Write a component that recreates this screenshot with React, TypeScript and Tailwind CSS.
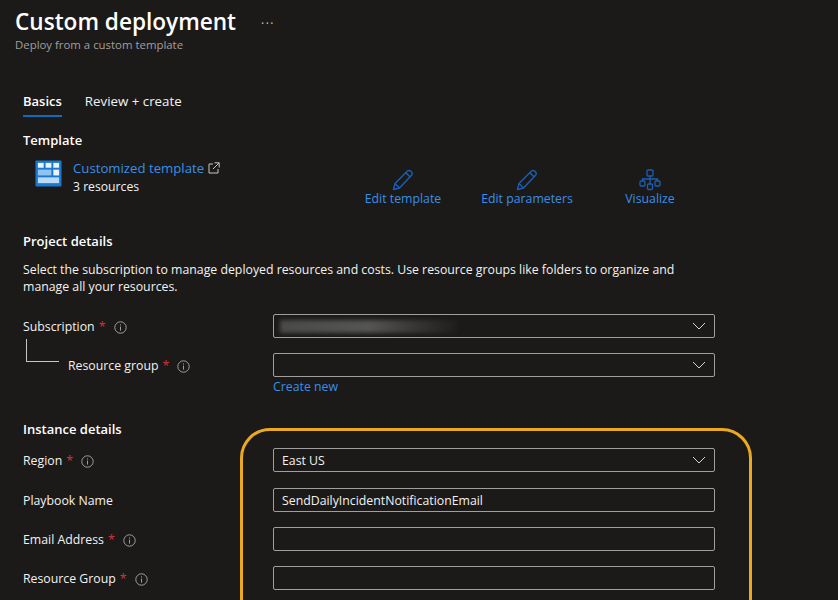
import React from "react";

const font = "font-['Open_Sans','Noto_Sans',sans-serif]";

function InfoIcon() {
  return (
    <svg width="13" height="13" viewBox="0 0 13 13" fill="none" className="shrink-0">
      <circle cx="6.5" cy="6.5" r="5.7" stroke="#a19f9d" strokeWidth="1" />
      <rect x="6" y="5.6" width="1" height="4" fill="#a19f9d" />
      <rect x="6" y="3.4" width="1" height="1.1" fill="#a19f9d" />
    </svg>
  );
}

function Chevron() {
  return (
    <svg width="14" height="8" viewBox="0 0 14 8" fill="none" className="shrink-0">
      <path d="M1 1 L7 7 L13 1" stroke="#d6d4d2" strokeWidth="1" />
    </svg>
  );
}

function PencilIcon() {
  return (
    <svg width="22" height="22" viewBox="0 0 22 22" fill="none">
      <path
        d="M1.5 20.5 L3 14.5 L15.5 2 Q17 0.8 19 2.2 Q21 4 19.8 6 L7.5 19 Z M3 14.5 L7.5 19 M13.8 3.8 L18.2 8"
        stroke="#1b5fb5"
        strokeWidth="1.4"
        strokeLinejoin="round"
      />
    </svg>
  );
}

function VisualizeIcon() {
  return (
    <svg width="22" height="22" viewBox="0 0 22 22" fill="none" stroke="#1b5fb5" strokeWidth="1.3">
      <rect x="8" y="1" width="6" height="6" rx="1" />
      <rect x="1" y="12" width="5" height="5" rx="1" />
      <rect x="8.5" y="15" width="5" height="5.5" rx="1" />
      <rect x="16" y="12" width="5" height="5" rx="1" />
      <path d="M11 7 V15 M3.5 12 V10 H18.5 V12" />
    </svg>
  );
}

function TemplateIcon() {
  return (
    <svg width="27" height="27" viewBox="0 0 28 28" className="shrink-0">
      <rect x="0.5" y="0.5" width="27" height="27" rx="1" fill="#1b78d0" />
      <rect x="3" y="3" width="6" height="5" fill="#eaf4fd" />
      <rect x="11" y="3" width="6" height="5" fill="#eaf4fd" />
      <rect x="19" y="3" width="6" height="5" fill="#eaf4fd" />
      <rect x="3" y="10" width="14" height="6" fill="#8fc3f0" />
      <rect x="19" y="10" width="6" height="6" fill="#eaf4fd" />
      <rect x="3" y="18" width="22" height="6" fill="#b9dbf7" />
    </svg>
  );
}

function ExternalIcon() {
  return (
    <svg width="12" height="12" viewBox="0 0 12 12" fill="none" stroke="#c8c6c4" strokeWidth="1">
      <path d="M5 2 H1 V11 H10 V7 M6.5 0.8 H11.2 V5.5 M11 1 L5 7" />
    </svg>
  );
}

function ActionLink({ icon, label, className }: { icon: React.ReactNode; label: string; className: string }) {
  return (
    <div className={`flex flex-col items-center ${className}`}>
      {icon}
      <span className="text-[12.3px] leading-[16px] text-[#3a8ee6] whitespace-nowrap">{label}</span>
    </div>
  );
}

function Label({ text, required }: { text: string; required?: boolean }) {
  return (
    <div className="flex items-center">
      <span className="text-[12.3px] text-[#f3f2f1] whitespace-nowrap">{text}</span>
      {required && <span className="text-[#d13438] text-[12.5px] ml-[4px]">*</span>}
      <span className="ml-[8px]">
        <InfoIcon />
      </span>
    </div>
  );
}

function Field({ value, dropdown, children }: { value?: string; dropdown?: boolean; children?: React.ReactNode }) {
  return (
    <div className="w-[442px] h-[24px] border border-[#a19f9d] rounded-[2px] flex items-center justify-between pl-[8px] pr-[8px] shrink-0">
      <span className="text-[12.3px] mt-[2px] text-[#f3f2f1] whitespace-nowrap">{value}</span>
      {children}
      {dropdown && <Chevron />}
    </div>
  );
}

export default function App() {
  return (
    <div className={`relative w-[838px] h-[600px] overflow-hidden bg-[#1b1a19] text-white ${font}`}>
      {/* Header */}
      <div className="pl-[15px] pt-[7px]">
        <div className="flex items-center">
          <h1 className="text-[22.6px] leading-[30px] font-semibold text-white">Custom deployment</h1>
          <span className="ml-[25px] mt-[4px] text-[#c8c6c4] text-[12px] leading-none tracking-[1.5px]">···</span>
        </div>
        <p className="text-[11.4px] leading-[16px] text-[#a19f9d]">Deploy from a custom template</p>
      </div>

      <div className="pl-[23px] pt-[40px]">
        {/* Tabs */}
        <div className="flex gap-[23px] text-[13.3px]">
          <div className="font-semibold text-[13px] border-b-2 border-[#0f6cbd] h-[24px] leading-[17px]">Basics</div>
          <div className="leading-[17px] text-[#f3f2f1]">Review + create</div>
        </div>

        {/* Template */}
        <h2 className="text-[13px] font-semibold leading-[18px] mt-[14px]">Template</h2>
        <div className="flex items-start mt-[10px]">
          <div className="flex items-start w-[342px] pl-[12px]">
            <div className="mt-[1px]">
              <TemplateIcon />
            </div>
            <div className="ml-[11px]">
              <div className="flex items-center gap-[4px]">
                <span className="text-[13.2px] leading-[18px] text-[#3a8ee6]">Customized template</span>
                <ExternalIcon />
              </div>
              <div className="text-[12.2px] leading-[19px] text-[#f3f2f1]">3 resources</div>
            </div>
          </div>
          <div className="flex mt-[10px]">
            <ActionLink className="w-[76px]" icon={<PencilIcon />} label="Edit template" />
            <ActionLink className="w-[90px] ml-[41px]" icon={<PencilIcon />} label="Edit parameters" />
            <ActionLink className="w-[50px] ml-[53px]" icon={<VisualizeIcon />} label="Visualize" />
          </div>
        </div>

        {/* Project details */}
        <h2 className="text-[13px] font-semibold leading-[18px] mt-[25px]">Project details</h2>
        <p className="text-[12.3px] leading-[17px] text-[#f3f2f1] mt-[11px] w-[670px]">
          Select the subscription to manage deployed resources and costs. Use resource groups like folders to organize and manage all your resources.
        </p>

        <div className="flex items-center h-[24px] mt-[19px]">
          <div className="w-[250px] mt-[2px]">
            <Label text="Subscription" required />
          </div>
          <Field dropdown>
            <div className="flex-1 h-[13px] -ml-[2px] mr-[235px] bg-gradient-to-r from-[#4a4a48] via-[#555553] to-[#1f1e1d] blur-[2px]" />
          </Field>
        </div>
        <div className="flex items-center h-[24px] mt-[15px]">
          <div className="w-[250px] mt-[2px] flex items-center">
            <div className="w-[33px] h-[23px] ml-[3px] -mt-[31px] border-l border-b border-[#c8c6c4] shrink-0" />
            <div className="ml-[9px]">
              <Label text="Resource group" required />
            </div>
          </div>
          <Field dropdown />
        </div>
        <div className="pl-[250px] text-[12.3px] leading-[17px] text-[#3a8ee6] mt-[1px]">Create new</div>

        {/* Instance details */}
        <h2 className="text-[13px] font-semibold leading-[18px] mt-[25px]">Instance details</h2>
        <div className="flex items-center h-[24px] mt-[10px]">
          <div className="w-[250px] mt-[2px]">
            <Label text="Region" required />
          </div>
          <Field value="East US" dropdown />
        </div>
        <div className="flex items-center h-[24px] mt-[16px]">
          <div className="w-[250px] mt-[2px] text-[12.3px] text-[#f3f2f1]">Playbook Name</div>
          <Field value="SendDailyIncidentNotificationEmail" />
        </div>
        <div className="flex items-center h-[24px] mt-[15px]">
          <div className="w-[250px] mt-[2px]">
            <Label text="Email Address" required />
          </div>
          <Field />
        </div>
        <div className="flex items-center h-[24px] mt-[15px]">
          <div className="w-[250px] mt-[2px]">
            <Label text="Resource Group" required />
          </div>
          <Field />
        </div>
      </div>

      {/* Highlight drawn over the form */}
      <div className="absolute left-[240px] top-[428px] w-[512px] h-[260px] border-[3px] border-[#eba91f] rounded-[30px] pointer-events-none" />
    </div>
  );
}
